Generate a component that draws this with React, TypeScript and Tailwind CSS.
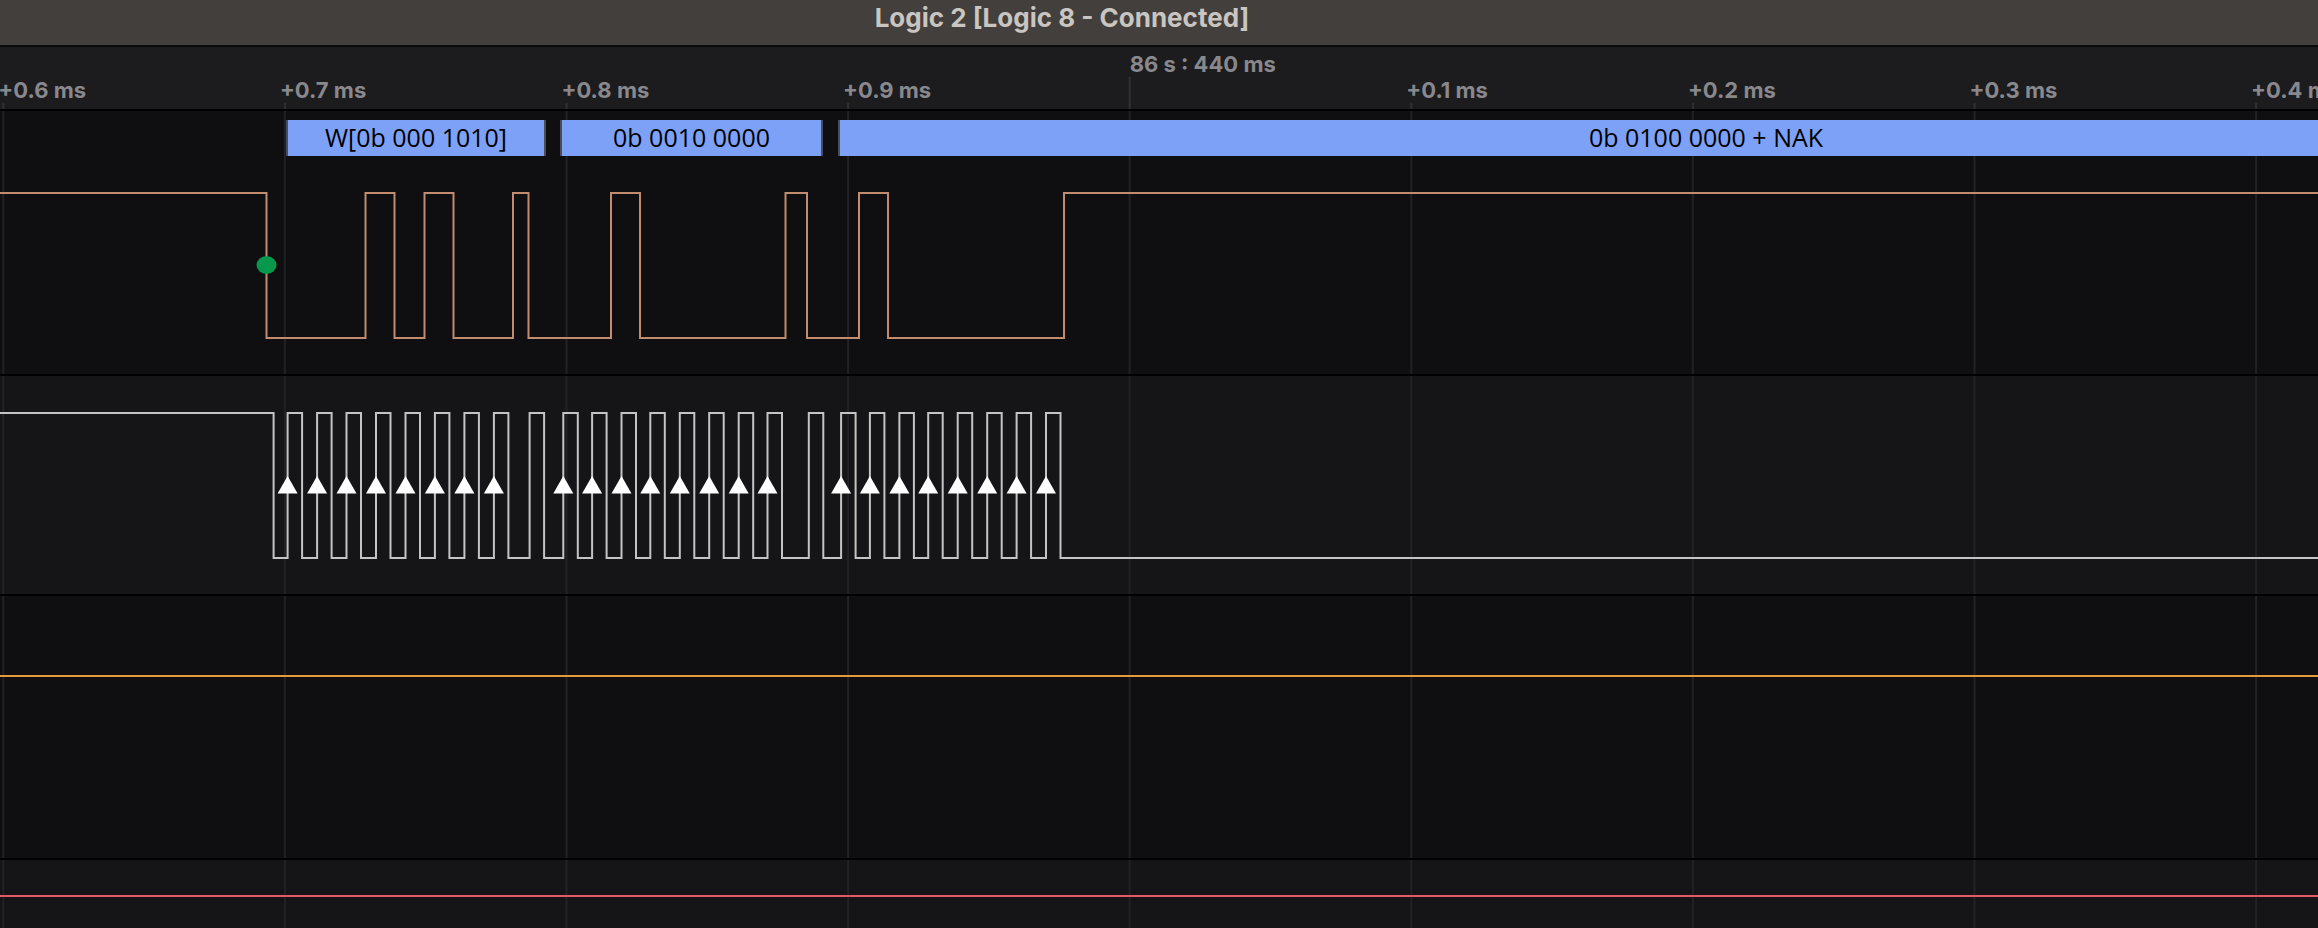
import React from "react";

const TICKS = [3.3, 284.9, 566.5, 848.1, 1129.7, 1411.3, 1692.9, 1974.5, 2256.1];
const LABELS: (string | null)[] = [
  "+0.6 ms",
  "+0.7 ms",
  "+0.8 ms",
  "+0.9 ms",
  null,
  "+0.1 ms",
  "+0.2 ms",
  "+0.3 ms",
  "+0.4 ms",
];

const W = 2318;

// SDA transitions (x positions), starting high
const SDA_EDGES = [266.5, 365.5, 394.5, 424.5, 453.5, 513, 528.5, 611, 640, 785.5, 807, 859, 888, 1064];

const CLK_RISE = [
  287.6, 317.1, 346.5, 376.0, 405.5, 434.9, 464.4, 493.9,
  563.3, 592.1, 621.5, 650.3, 679.8, 709.2, 738.7, 767.5,
  841.1, 869.9, 899.4, 928.2, 957.7, 987.2, 1016.6, 1046.0,
];
const CLK_ACK = [529.6, 808.8];
const HIGH_W = 14.5;

function sdaPath(high: number, low: number) {
  let d = `M -5 ${high}`;
  let level = high;
  for (const x of SDA_EDGES) {
    d += ` L ${x} ${level}`;
    level = level === high ? low : high;
    d += ` L ${x} ${level}`;
  }
  d += ` L ${W + 5} ${level}`;
  return d;
}

function clkPath(high: number, low: number) {
  const pulses = [...CLK_RISE, ...CLK_ACK].sort((a, b) => a - b);
  let d = `M -5 ${high} L 273.6 ${high} L 273.6 ${low}`;
  for (const r of pulses) {
    d += ` L ${r} ${low} L ${r} ${high} L ${r + HIGH_W} ${high} L ${r + HIGH_W} ${low}`;
  }
  d += ` L ${W + 5} ${low}`;
  return d;
}

function Grid({ h }: { h: number }) {
  return (
    <>
      {TICKS.map((t, i) => (
        <line key={i} x1={t} x2={t} y1={0} y2={h} stroke="#222226" strokeWidth={2} />
      ))}
    </>
  );
}

const boxes = [
  { left: 286, width: 260, text: "W[0b 000 1010]" },
  { left: 560, width: 263, text: "0b 0010 0000" },
  { left: 838, width: 1736, text: "0b 0100 0000 + NAK" },
];

export default function App() {
  return (
    <div
      className="w-[2318px] h-[928px] overflow-hidden flex flex-col bg-[#0f0f11]"
      style={{ fontFamily: "Inter, 'Noto Sans', sans-serif" }}
    >
      {/* Title bar */}
      <div className="h-[47px] shrink-0 bg-[#433f3c] border-b-2 border-[#0b0b0b] flex justify-center pr-[194px]">
        <div className="pt-[5px] text-[26px] leading-[26px] font-bold text-[#c9c5c1]">
          Logic 2 [Logic 8 - Connected]
        </div>
      </div>

      {/* Ruler */}
      <div className="h-[64px] shrink-0 bg-[#1c1c1f] border-b-2 border-black relative">
        <svg width={W} height={62} className="block">
          {TICKS.map((t, i) => (
            <line
              key={i}
              x1={t}
              x2={t}
              y1={i === 4 ? 30 : 56}
              y2={62}
              stroke="#303034"
              strokeWidth={2}
            />
          ))}
        </svg>
        {LABELS.map((l, i) =>
          l ? (
            <div
              key={i}
              className="absolute top-[32px] text-[22px] leading-[22px] font-bold text-[#88888d] whitespace-nowrap"
              style={{ left: TICKS[i] - 5 }}
            >
              {l}
            </div>
          ) : null
        )}
        <div
          className="absolute top-[6px] text-[22px] leading-[22px] font-bold text-[#88888d] whitespace-nowrap"
          style={{ left: TICKS[4] }}
        >
          86 s : 440 ms
        </div>
      </div>

      {/* Row 1: I2C decode + SDA */}
      <div className="h-[265px] shrink-0 bg-[#0f0f11] border-b-2 border-black relative overflow-hidden">
        <svg width={W} height={263} className="block">
          <Grid h={263} />
          <path d={sdaPath(82, 227)} fill="none" stroke="#c28c6e" strokeWidth={2} />
          <ellipse cx={266.5} cy={154} rx={10} ry={9} fill="#08984d" />
        </svg>
        {boxes.map((b, i) => (
          <div
            key={i}
            className="absolute top-[9px] h-[36px] bg-[#7ea1f8] border-x-2 border-[#4a4e5a] flex items-center justify-center text-black text-[25px] whitespace-nowrap"
            style={{ left: b.left, width: b.width, fontFamily: "'Open Sans', 'Noto Sans', sans-serif" }}
          >
            {b.text}
          </div>
        ))}
      </div>

      {/* Row 2: SCL */}
      <div className="h-[220px] shrink-0 bg-[#151517] border-b-2 border-black">
        <svg width={W} height={218} className="block">
          <Grid h={218} />
          <path d={clkPath(37, 182)} fill="none" stroke="#c4c4c4" strokeWidth={2} />
          {CLK_RISE.map((x, i) => (
            <polygon key={i} points={`${x},100 ${x - 10},117.5 ${x + 10},117.5`} fill="#ffffff" />
          ))}
        </svg>
      </div>

      {/* Row 3 */}
      <div className="h-[264px] shrink-0 bg-[#0f0f11] border-b-2 border-black">
        <svg width={W} height={262} className="block">
          <Grid h={262} />
          <line x1={0} x2={W} y1={80} y2={80} stroke="#e39a3c" strokeWidth={2} />
        </svg>
      </div>

      {/* Row 4 */}
      <div className="flex-1 bg-[#151517]">
        <svg width={W} height={68} className="block">
          <Grid h={68} />
          <line x1={0} x2={W} y1={36} y2={36} stroke="#e45a6a" strokeWidth={2} />
        </svg>
      </div>
    </div>
  );
}
